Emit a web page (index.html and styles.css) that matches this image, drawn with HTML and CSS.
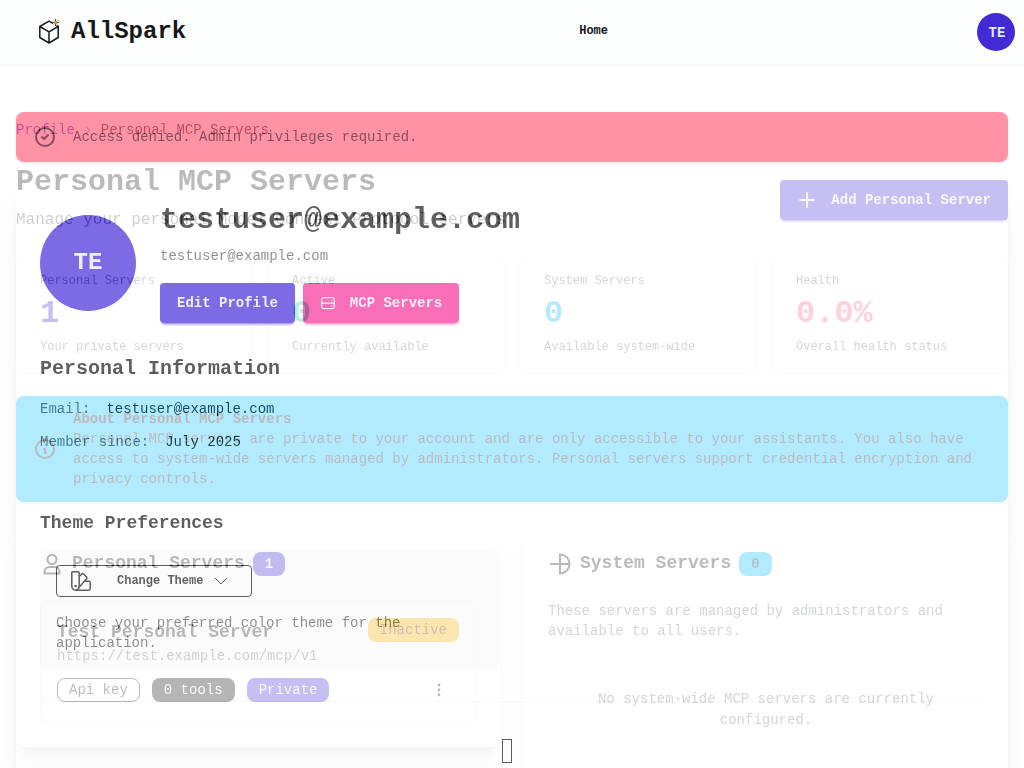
FILE: index.html
```html
<!DOCTYPE html>
<html lang="en">
<head>
<meta charset="utf-8">
<meta name="viewport" content="width=device-width, initial-scale=1">
<title>AllSpark</title>
<link rel="stylesheet" href="styles.css">
</head>
<body>
<header class="navbar">
  <a class="brand" href="#">
    <svg class="brand-icon" viewBox="0 0 26 28" fill="none" stroke="#18181b" stroke-width="1.500" stroke-linejoin="round"><path d="M17 6.300 13 4.200 3.800 9.500v11L13 26l9.200-5.500v-11L20.500 8.500M3.800 9.500 13 14.800l9.200-5.300M13 14.800V26"/><path d="M19.500 2v7M16 5.500h7" stroke="#333" stroke-width=".9"/><path d="m17.500 3.500 4 4M21.500 3.500l-4 4" stroke="#555" stroke-width=".6"/><circle cx="19.500" cy="5.500" r="1.300" fill="#fcb700" stroke="none"/><circle cx="22.600" cy="3.500" r=".9" fill="#fcc840" stroke="none"/></svg>
    AllSpark
  </a>
  <nav><a class="nav-link" href="#">Home</a></nav>
  <button class="user" type="button">TE</button>
</header>
<main class="stage">
  <section class="view view-profile">
    <div class="alert alert-error" role="alert">
      <svg class="icon24" viewBox="0 0 24 24" fill="none" stroke="currentColor" stroke-width="2" stroke-linecap="round" stroke-linejoin="round"><circle cx="12" cy="12" r="9"/><path d="m9 12 2 2 4-4"/></svg>
      <span>Access denied. Admin privileges required.</span>
    </div>
    <div class="card profile">
      <div class="identity">
        <div class="avatar">TE</div>
        <div>
          <h1 class="title">testuser@example.com</h1>
          <p class="mail">testuser@example.com</p>
          <div class="actions">
            <button class="btn primary" type="button">Edit Profile</button>
            <button class="btn secondary" type="button"><svg class="icon16" viewBox="0 0 16 16" fill="none" stroke="currentColor" stroke-width="1.200"><rect x="1.600" y="2.600" width="12.800" height="11" rx="1.800"/><path d="M1.600 7.200q.3.900 1.400.9h10q1.100 0 1.400-.9M1.600 9q.3-.9 1.400-.9M14.400 9q-.3-.9-1.400-.9M11 5.500h1.500M11 11h1.500"/></svg>MCP Servers</button>
          </div>
        </div>
      </div>
      <h2 class="section-title">Personal Information</h2>
      <dl class="facts">
        <div class="fact"><dt>Email:</dt><dd>testuser@example.com</dd></div>
        <div class="fact"><dt>Member since:</dt><dd>July 2025</dd></div>
      </dl>
      <h3 class="sub-title">Theme Preferences</h3>
      <div class="columns">
        <div class="theme-box">
          <button class="theme-btn" type="button">
            <svg class="icon20" viewBox="0 0 20 20" fill="none" stroke="currentColor" stroke-width="1.500" stroke-linejoin="round"><path d="M1.700.8h5.200q1.300 0 1.300 1.300v13.200a3.700 3.700 0 0 1-7.400 0V1.700q0-.9.900-.9zM8.200 5.500 10.800 3q.9-.8 1.800 0l3 3q.8.900 0 1.800L7 17.500M13.800 10.200h4q1.400 0 1.400 1.400v6.200q0 1.400-1.400 1.400H4.500"/><circle cx="4.500" cy="15" r=".5"/></svg>
            <span>Change Theme</span>
            <svg class="chevron" viewBox="0 0 14 14" fill="none" stroke="currentColor"><path d="m1 4 6 6 6-6"/></svg>
          </button>
          <p class="theme-note">Choose your preferred color theme for the application.</p>
        </div>
      </div>
      <div class="rule"><span class="glyph-box"></span></div>
    </div>
  </section>

  <section class="view view-servers">
    <nav class="crumbs"><a class="crumb-link" href="#">Profile</a><span class="crumb-sep"></span><span>Personal MCP Servers</span></nav>
    <div class="page-head">
      <div>
        <h1 class="title">Personal MCP Servers</h1>
        <p class="subtitle">Manage your personal Model Context Protocol servers</p>
      </div>
      <button class="btn primary" type="button"><svg class="icon20" viewBox="0 0 20 20" fill="none" stroke="currentColor" stroke-width="2"><path d="M10 2.500v15M2.500 10h15"/></svg>Add Personal Server</button>
    </div>
    <div class="stats">
      <div class="stat"><div class="stat-label">Personal Servers</div><div class="stat-value c-primary">1</div><div class="stat-label">Your private servers</div></div>
      <div class="stat"><div class="stat-label">Active</div><div class="stat-value c-success">0</div><div class="stat-label">Currently available</div></div>
      <div class="stat"><div class="stat-label">System Servers</div><div class="stat-value c-info">0</div><div class="stat-label">Available system-wide</div></div>
      <div class="stat"><div class="stat-label">Health</div><div class="stat-value c-error">0.0%</div><div class="stat-label">Overall health status</div></div>
    </div>
    <div class="alert alert-info">
      <svg class="icon24" viewBox="0 0 24 24" fill="none" stroke="currentColor" stroke-width="2" stroke-linecap="round" stroke-linejoin="round"><circle cx="12" cy="12" r="9"/><path d="M11 12h1v4h1M12 8h.01"/></svg>
      <div><h3 class="alert-title">About Personal MCP Servers</h3><p>Personal MCP servers are private to your account and are only accessible to your assistants. You also have access to system-wide servers managed by administrators. Personal servers support credential encryption and privacy controls.</p></div>
    </div>
    <div class="columns">
      <div class="card">
        <h2 class="card-title"><svg class="icon24" viewBox="0 0 24 24" fill="none" stroke="currentColor" stroke-width="2"><circle cx="12" cy="7.500" r="4.500"/><path d="M4.500 21.500v-1.500a5 5 0 0 1 5-5h5a5 5 0 0 1 5 5v1.500z"/></svg>Personal Servers<span class="badge b-primary">1</span></h2>
        <article class="server">
          <div class="server-head"><h3 class="server-name">Test Personal Server</h3><span class="badge b-warning">Inactive</span></div>
          <p class="muted">https://test.example.com/mcp/v1</p>
          <div class="server-foot">
            <span class="badge b-outline">Api key</span><span class="badge b-neutral">0 tools</span><span class="badge b-primary">Private</span>
            <button class="more" type="button" aria-label="More"><svg class="icon16" viewBox="0 0 16 16" fill="currentColor"><circle cx="8" cy="3" r="1.400"/><circle cx="8" cy="8" r="1.400"/><circle cx="8" cy="13" r="1.400"/></svg></button>
          </div>
        </article>
      </div>
      <div class="card system">
        <h2 class="card-title"><svg class="icon24" viewBox="0 0 24 24" fill="none" stroke="currentColor" stroke-width="2"><path d="M2 12h19.500M12 2.500v19a9.500 9.500 0 0 0 0-19z"/></svg>System Servers<span class="badge b-info">0</span></h2>
        <p class="muted">These servers are managed by administrators and available to all users.</p>
        <p class="muted empty">No system-wide MCP servers are currently configured.</p>
      </div>
    </div>
  </section>
</main>
</body>
</html>
```
FILE: styles.css
```css
* { box-sizing: border-box; margin: 0; }
body {
  height: 100vh;
  display: flex;
  flex-direction: column;
  overflow: hidden;
  background: #fefefe;
  color: #18181b;
  font: 14px/20px "Liberation Mono", monospace;
}
a { color: inherit; text-decoration: none; }
button { font: inherit; color: inherit; border: 0; background: none; padding: 0; }
svg { flex: none; }
.icon24 { width: 24px; height: 24px; }
.icon20 { width: 20px; height: 20px; }
.icon16 { width: 16px; height: 16px; }

.navbar {
  position: relative;
  z-index: 1;
  flex: none;
  height: 64px;
  display: flex;
  align-items: center;
  justify-content: space-between;
  padding: 0 9px 0 36px;
  background: #fdfefe;
  box-shadow: 0 1px 2px rgba(0, 0, 0, .06);
}
.brand { display: flex; align-items: center; gap: 9px; padding-right: 24px; font-size: 24px; line-height: 32px; font-weight: 700; }
.brand-icon { width: 26px; height: 28px; margin-bottom: 2px; }
.nav-link { display: block; padding-bottom: 2px; font-size: 12px; font-weight: 700; }
.user { width: 38px; height: 38px; padding: 2px 0 0 2px; border-radius: 50%; background: #422ad5; color: #e0e7ff; font-weight: 700; }

.stage { flex: 1; min-height: 0; display: grid; grid-template: minmax(0, 1fr) / minmax(0, 1fr); isolation: isolate; }
.view { grid-area: 1 / 1; overflow: hidden; padding: 48px 16px 0; background: #fefefe; mix-blend-mode: plus-lighter; }
.view-profile { opacity: .7; }
.view-servers { opacity: .3; }

.alert { display: flex; align-items: center; gap: 16px; padding: 13px 17px; border-radius: 8px; box-shadow: 0 1px 3px rgba(0, 0, 0, .15); }
.alert-error { background: #ff627d; color: #4d0218; margin-bottom: 16px; }
.alert-info { background: #00bafe; margin-bottom: 24px; }
.alert-title { font-size: 14px; }

.card { padding: 24px; border-radius: 8px; background: #fefefe; box-shadow: 0 20px 25px -5px rgba(0, 0, 0, .1), 0 8px 10px -6px rgba(0, 0, 0, .1); }
.title { font-size: 30px; line-height: 36px; }
.profile { min-height: 800px; }
.identity { display: flex; align-items: center; gap: 24px; margin-bottom: 32px; }
.avatar { width: 96px; height: 96px; flex: none; display: grid; place-items: center; border-radius: 50%; background: #422ad5; color: #e0e7ff; font-size: 24px; font-weight: 700; }
.mail { margin: 8px 0 16px; line-height: 21px; opacity: .7; }
.actions { display: flex; gap: 8px; }
.btn { display: flex; align-items: center; justify-content: center; gap: 14px; height: 40px; padding: 0 17px; border-radius: 4px; font-weight: 700; }
.primary { background: #422ad5; color: #e0e7ff; }
.secondary { background: #f43098; color: #f9e4f0; }
.btn.primary { box-shadow: 0 3px 3px -2px #422ad5; }
.btn.secondary { box-shadow: 0 3px 3px -2px #f43098; }
.section-title { font-size: 20px; line-height: 28px; margin-bottom: 16px; }
.facts { display: grid; gap: 12px; line-height: 21px; margin-bottom: 56px; }
.fact { display: flex; gap: 16px; }
.fact dt { opacity: .7; }
.fact dd { margin: 0; }
.sub-title { font-size: 18px; line-height: 28px; margin-bottom: 12px; }
.columns { display: grid; grid-template-columns: repeat(2, minmax(0, 1fr)); gap: 24px; align-items: start; }
.theme-box { padding: 16px; border-radius: 8px; background: #f8f8f8; }
.theme-btn { display: flex; align-items: center; height: 32px; padding: 0 23px 0 14px; border: 1px solid #18181b; border-radius: 4px; font-size: 12px; font-weight: 700; gap: 26px; }
.chevron { width: 14px; height: 14px; margin-left: -15px; }
.theme-note { margin-top: 16px; opacity: .7; }
.rule { margin-top: 32px; padding-top: 37px; border-top: 1px solid #f4f4f4; display: flex; justify-content: center; }
.glyph-box { width: 10px; height: 24px; margin-right: 10px; border: 1px solid #18181b; }

.crumbs { display: flex; align-items: center; padding: 8px 0; margin-bottom: 16px; }
.crumb-link { color: #422ad5; }
.crumb-sep { width: 6px; height: 6px; margin: 0 12px 0 8px; border: solid #999; border-width: 1px 1px 0 0; transform: rotate(45deg); }
.page-head { display: flex; align-items: center; justify-content: space-between; margin-bottom: 20px; }
.subtitle { margin-top: 8px; padding-bottom: 4px; font-size: 16px; line-height: 24px; opacity: .7; }
.stats { display: grid; grid-template-columns: repeat(4, minmax(0, 1fr)); gap: 16px; margin-bottom: 24px; }
.stat { padding: 16px 24px; border-radius: 8px; background: #fefefe; box-shadow: 0 1px 3px rgba(0, 0, 0, .1), 0 1px 2px -1px rgba(0, 0, 0, .1); }
.stat-label { font-size: 12px; line-height: 18px; color: #747476; }
.stat-value { font-size: 32px; line-height: 48px; font-weight: 700; }
.c-primary { color: #422ad5; }
.c-success { color: #00d390; }
.c-info { color: #00bafe; }
.c-error { color: #ff627d; }

.card-title { display: flex; align-items: center; gap: 8px; margin-bottom: 24px; font-size: 18px; line-height: 27px; }
.badge { display: inline-flex; align-items: center; height: 24px; padding: 0 12px; border-radius: 8px; font-size: 14px; line-height: 20px; }
.b-primary { background: #422ad5; color: #e0e7ff; }
.b-warning { background: #fcb700; color: #793205; }
.b-outline { padding: 0 11px; border: 1px solid #18181b; }
.b-neutral { background: #09090b; color: #e4e4e7; }
.b-info { background: #00bafe; color: #042e49; }
.server { padding: 16px; border: 1px solid #eee; border-radius: 8px; }
.server-head { display: flex; align-items: center; justify-content: space-between; margin-bottom: 4px; }
.server-name { padding-top: 4px; font-size: 18px; line-height: 20px; }
.muted { color: #6a7282; }
.server-foot { display: flex; align-items: center; gap: 12px; margin-top: 8px; }
.more { display: grid; place-items: center; width: 40px; height: 32px; margin-left: auto; }
.system { min-height: 260px; }
.empty { padding: 48px 32px; line-height: 21px; text-align: center; }
```
